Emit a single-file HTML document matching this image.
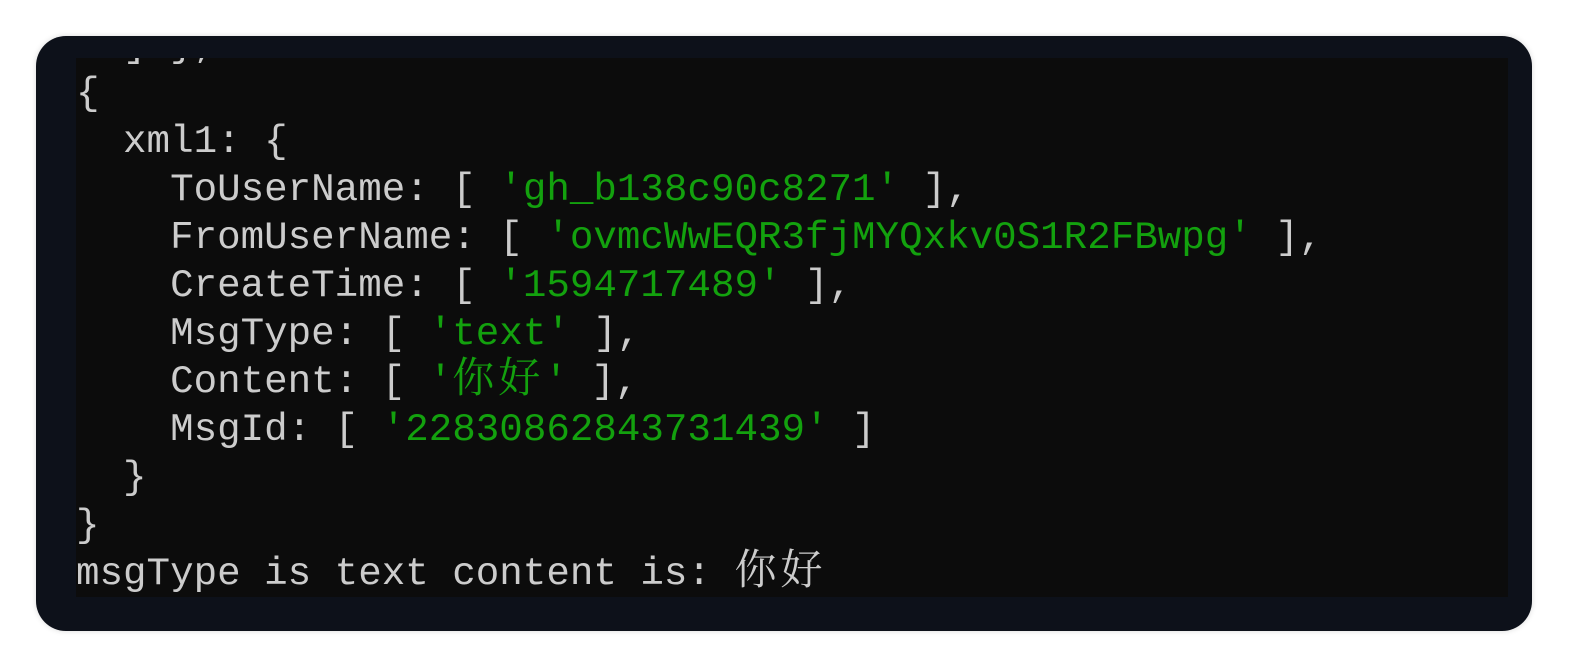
<!DOCTYPE html>
<html><head><meta charset="utf-8"><style>
html,body{margin:0;padding:0;background:#fff;width:1574px;height:670px;overflow:hidden}
.outer{position:absolute;left:36px;top:36px;width:1496px;height:595px;background:#0d111a;border-radius:30px;box-shadow:0 0 6px rgba(0,0,0,.15)}
.inner{position:absolute;left:76px;top:58px;width:1432px;height:539px;background:#0c0c0c;overflow:hidden}
pre{position:absolute;left:0;top:-36px;margin:0;font-family:"Liberation Mono","Noto Serif CJK SC",monospace;font-size:39.2px;line-height:48px;color:#cccccc}
.g{color:#13a10e}
.c{font-family:"Noto Serif CJK SC","Noto Sans CJK SC",serif;font-size:42px;letter-spacing:4px;line-height:0}
</style></head><body>
<div class="outer"></div>
<div class="inner"><pre>  ] },
{
  xml1: {
    ToUserName: [ <span class="g">'gh_b138c90c8271'</span> ],
    FromUserName: [ <span class="g">'ovmcWwEQR3fjMYQxkv0S1R2FBwpg'</span> ],
    CreateTime: [ <span class="g">'1594717489'</span> ],
    MsgType: [ <span class="g">'text'</span> ],
    Content: [ <span class="g">'<span class="c">你好</span>'</span> ],
    MsgId: [ <span class="g">'22830862843731439'</span> ]
  }
}
msgType is text content is: <span class="c">你好</span></pre></div>
</body></html>
